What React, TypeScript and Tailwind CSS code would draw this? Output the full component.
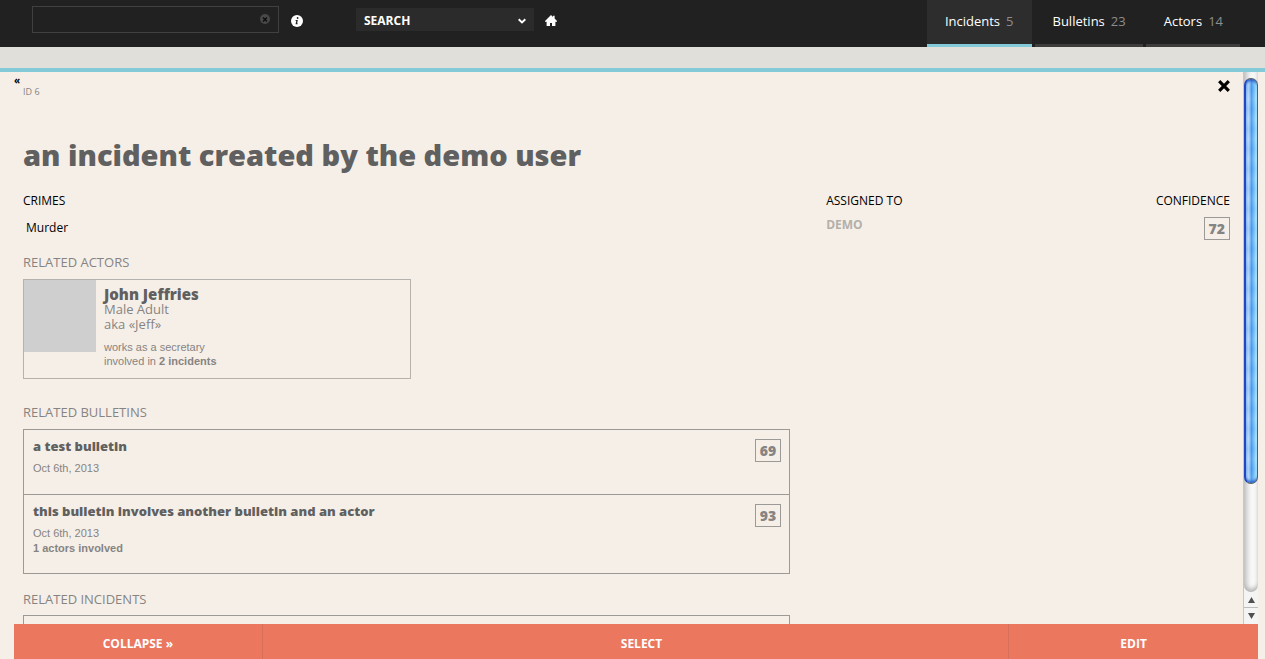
import { useRef, type ReactNode } from "react";

const tabs = [
  { label: "Incidents", count: 5, active: true },
  { label: "Bulletins", count: 23, active: false },
  { label: "Actors", count: 14, active: false },
];

const bulletins = [
  { title: "a test bulletin", date: "Oct 6th, 2013", note: "", score: 69 },
  {
    title: "this bulletin involves another bulletin and an actor",
    date: "Oct 6th, 2013",
    note: "1 actors involved",
    score: 93,
  },
];

function InfoIcon() {
  return (
    <svg viewBox="0 0 12 12" className="size-3" aria-hidden="true">
      <circle cx="6" cy="6" r="6" fill="#fff" />
      <circle cx="6.6" cy="3" r="0.9" fill="#212121" />
      <path d="M4.7 5h2.1L6.1 8.4h.8l-.2.9H4.5l.8-3.4h-.8z" fill="#212121" />
    </svg>
  );
}

function ClearIcon() {
  return (
    <svg viewBox="0 0 10 10" className="size-[10px]" aria-hidden="true">
      <circle cx="5" cy="5" r="5" fill="#484848" />
      <path d="M3 3.500l4 4M7 3.500l-4 4" stroke="#0c0c0c" strokeWidth="1.400" />
    </svg>
  );
}

function ChevronIcon() {
  return (
    <svg viewBox="0 0 8 6" className="h-[6px] w-2" aria-hidden="true">
      <path d="M.7 1.200l3.300 3.200 3.300-3.200" fill="none" stroke="#fff" strokeWidth="1.900" />
    </svg>
  );
}

function HomeIcon() {
  return (
    <svg viewBox="0 0 12 11" className="h-[11px] w-3" aria-hidden="true">
      <path d="M6 0l2 2V.8h1.6v2.8L12 6v.8h-1.6V11H7V8H5v3H1.6V6.800H0V6z" fill="#fff" />
    </svg>
  );
}

function CloseIcon() {
  return (
    <svg viewBox="0 0 12 12" className="size-3" aria-hidden="true">
      <path d="M1.200 1.200l9.600 9.600M10.800 1.200l-9.600 9.600" stroke="#000" strokeWidth="3.200" />
    </svg>
  );
}

function Score({ value }: { value: number }) {
  return (
    <span className="flex h-[23px] shrink-0 items-center border border-[#9c9a97] px-1 text-sm font-extrabold text-[#868482]">
      {value}
    </span>
  );
}

function SectionTitle({ children }: { children: ReactNode }) {
  return <h2 className="text-[13px] leading-[18px] text-[#868482]">{children}</h2>;
}

function TopBar() {
  return (
    <header className="flex h-[47px] shrink-0 items-start bg-[#212121] pr-[25px] pl-8 text-white">
      <div className="mt-[6px] flex h-[27px] w-[247px] items-center border border-[#404040] pr-2">
        <input aria-label="Filter" type="text" className="h-full min-w-0 flex-1 bg-transparent px-2 text-xs outline-none" />
        <button type="button" aria-label="Clear" className="mb-[2px]">
          <ClearIcon />
        </button>
      </div>
      <button type="button" aria-label="Information" className="mt-[15px] ml-3">
        <InfoIcon />
      </button>
      <div className="mt-2 ml-[53px] grid h-[23px] w-[178px] items-center bg-[#2b2b2b]">
        <select
          aria-label="Search"
          className="col-start-1 row-start-1 h-full w-full appearance-none bg-transparent px-2 pt-[2px] text-xs font-bold text-white outline-none"
        >
          <option>SEARCH</option>
        </select>
        <span className="pointer-events-none col-start-1 row-start-1 mt-[2px] mr-2 justify-self-end">
          <ChevronIcon />
        </span>
      </div>
      <a href="#home" aria-label="Home" className="mt-[15px] ml-[11px]">
        <HomeIcon />
      </a>
      <nav className="ml-auto flex h-full gap-[3px]">
        {tabs.map((tab) => (
          <a
            key={tab.label}
            href={"#" + tab.label.toLowerCase()}
            className={
              tab.active
                ? "flex gap-[6px] border-b-[3px] border-[#84c9d8] bg-[#2d2d2d] px-[18px] text-[13px] leading-[42px] font-medium"
                : "flex gap-[6px] border-b-[3px] border-[#3f3d3b] pr-[17px] pl-[18px] text-[13px] leading-[42px] font-medium"
            }
          >
            <span>{tab.label}</span>
            <span className="text-[#8d8d8d]">{tab.count}</span>
          </a>
        ))}
      </nav>
    </header>
  );
}

function ScrollRail({ onMove }: { onMove: (distance: number) => void }) {
  return (
    <div className="flex w-[15px] shrink-0 flex-col border-l border-[#c9c7c4] bg-[#f4f4f4]">
      <div className="min-h-0 flex-1 rounded-b-full bg-linear-to-r from-[#cfcfcf] via-[#f6f6f6] to-[#fdfdfd] pt-[6px] shadow-[inset_0_-3px_4px_#b5b5b5]">
        <div className="h-[79%] rounded-full border border-l-2 border-[#555a66] border-l-[#2148c0] bg-[repeating-linear-gradient(180deg,#ffffff14_0px,#1b75e014_10px,#ffffff14_20px),linear-gradient(90deg,#8fbdf2_0%,#b4d8fa_25%,#4b9bee_50%,#73bdf9_70%,#b2f2ff_100%)] shadow-[inset_0_4px_3px_-2px_#2055c8,inset_0_-4px_3px_-2px_#2464d2]" />
      </div>
      <button
        type="button"
        aria-label="Scroll up"
        onClick={() => onMove(-40)}
        className="flex h-4 items-center justify-center border-b border-[#bdbdbd]"
      >
        <svg viewBox="0 0 7 6" className="h-[6px] w-[7px]" aria-hidden="true">
          <path d="M3.5 0L7 6H0z" fill="#505050" />
        </svg>
      </button>
      <button
        type="button"
        aria-label="Scroll down"
        onClick={() => onMove(40)}
        className="flex h-4 items-center justify-center"
      >
        <svg viewBox="0 0 7 6" className="h-[6px] w-[7px]" aria-hidden="true">
          <path d="M3.5 6L0 0h7z" fill="#505050" />
        </svg>
      </button>
    </div>
  );
}

function ActorCard() {
  return (
    <article className="mt-2 flex h-[100px] w-[388px] max-w-full border border-[#b5b2ad]">
      <div className="size-[72px] shrink-0 bg-[#cfcfcf]" />
      <div className="pt-[7px] pl-2 text-[#868482]">
        <h3 className="text-[15px] leading-[15px] font-extrabold text-[#606060]">John Jeffries</h3>
        <p className="text-[13px] leading-[15px]">Male Adult</p>
        <p className="text-[13px] leading-[15px]">aka «Jeff»</p>
        <div className="mt-2 font-['Liberation_Sans',sans-serif] text-[11px] leading-[14px]">
          <p>works as a secretary</p>
          <p>
            involved in <b>2 incidents</b>
          </p>
        </div>
      </div>
    </article>
  );
}

function BulletinList() {
  return (
    <ul className="mt-2 divide-y divide-[#9c9a97] border border-[#9c9a97]">
      {bulletins.map((item) => (
        <li
          key={item.title}
          className="flex items-start justify-between pt-[9px] pr-2 pb-[18px] pl-[9px] last:pb-[17px]"
        >
          <div>
            <h3 className="text-[13px] leading-[14px] font-extrabold text-[#606060]">{item.title}</h3>
            <div className="mt-2 font-['Liberation_Sans',sans-serif] text-[11px] leading-[15px] text-[#868482]">
              <p>{item.date}</p>
              {item.note && <p className="font-bold">{item.note}</p>}
            </div>
          </div>
          <Score value={item.score} />
        </li>
      ))}
    </ul>
  );
}

export default function App() {
  const pane = useRef<HTMLDivElement>(null);

  return (
    <div className="flex h-screen flex-col overflow-hidden bg-[#f6efe8] font-['Open_Sans',sans-serif] text-black">
      <TopBar />
      <div className="h-[25px] shrink-0 border-b-4 border-[#84c9d8] bg-[#e1dfda]" />
      <div className="mr-[7px] ml-[14px] flex min-h-0 flex-1 flex-col">
        <div className="flex min-h-0 flex-1">
          <main ref={pane} className="min-w-0 flex-1 overflow-y-auto pr-[13px] [scrollbar-width:none]">
            <div className="flex h-[63px] items-start justify-between">
              <div className="flex flex-col items-start">
                <button type="button" aria-label="Back" className="h-[13px] text-[10px] leading-4 font-bold">
                  «
                </button>
                <p className="pl-[9px] text-[9px] leading-[14px] text-[#868482]">ID 6</p>
              </div>
              <button type="button" aria-label="Close" className="mt-2">
                <CloseIcon />
              </button>
            </div>
            <div className="pl-[9px]">
              <h1 className="text-[29px] leading-10 font-extrabold text-[#606060]">an incident created by the demo user</h1>
              <div className="mt-[17px] grid grid-cols-[19fr_10fr] gap-9">
                <div>
                  <h2 className="text-xs leading-[18px]">CRIMES</h2>
                  <p className="mt-[9px] pl-[3px] text-xs leading-[18px]">Murder</p>
                  <section className="mt-4">
                    <SectionTitle>RELATED ACTORS</SectionTitle>
                    <ActorCard />
                  </section>
                  <section className="mt-6">
                    <SectionTitle>RELATED BULLETINS</SectionTitle>
                    <BulletinList />
                  </section>
                  <section className="mt-4">
                    <SectionTitle>RELATED INCIDENTS</SectionTitle>
                    <div className="mt-[7px] h-[66px] border border-[#9c9a97]" />
                  </section>
                </div>
                <div className="flex items-start justify-between text-xs leading-[18px]">
                  <div>
                    <h2>ASSIGNED TO</h2>
                    <p className="mt-[6px] font-bold text-[#b3afaa]">DEMO</p>
                  </div>
                  <div className="flex flex-col items-end gap-[7px]">
                    <h2>CONFIDENCE</h2>
                    <Score value={72} />
                  </div>
                </div>
              </div>
            </div>
          </main>
          <ScrollRail onMove={(distance) => pane.current?.scrollBy({ top: distance })} />
        </div>
        <footer className="grid h-[35px] shrink-0 grid-cols-[1fr_3fr_1fr] divide-x divide-[#d86f5a] bg-[#eb775f] text-xs font-bold text-white">
          <button type="button" className="pt-1">COLLAPSE »</button>
          <button type="button" className="pt-1 pl-3">SELECT</button>
          <button type="button" className="pt-1">EDIT</button>
        </footer>
      </div>
    </div>
  );
}
